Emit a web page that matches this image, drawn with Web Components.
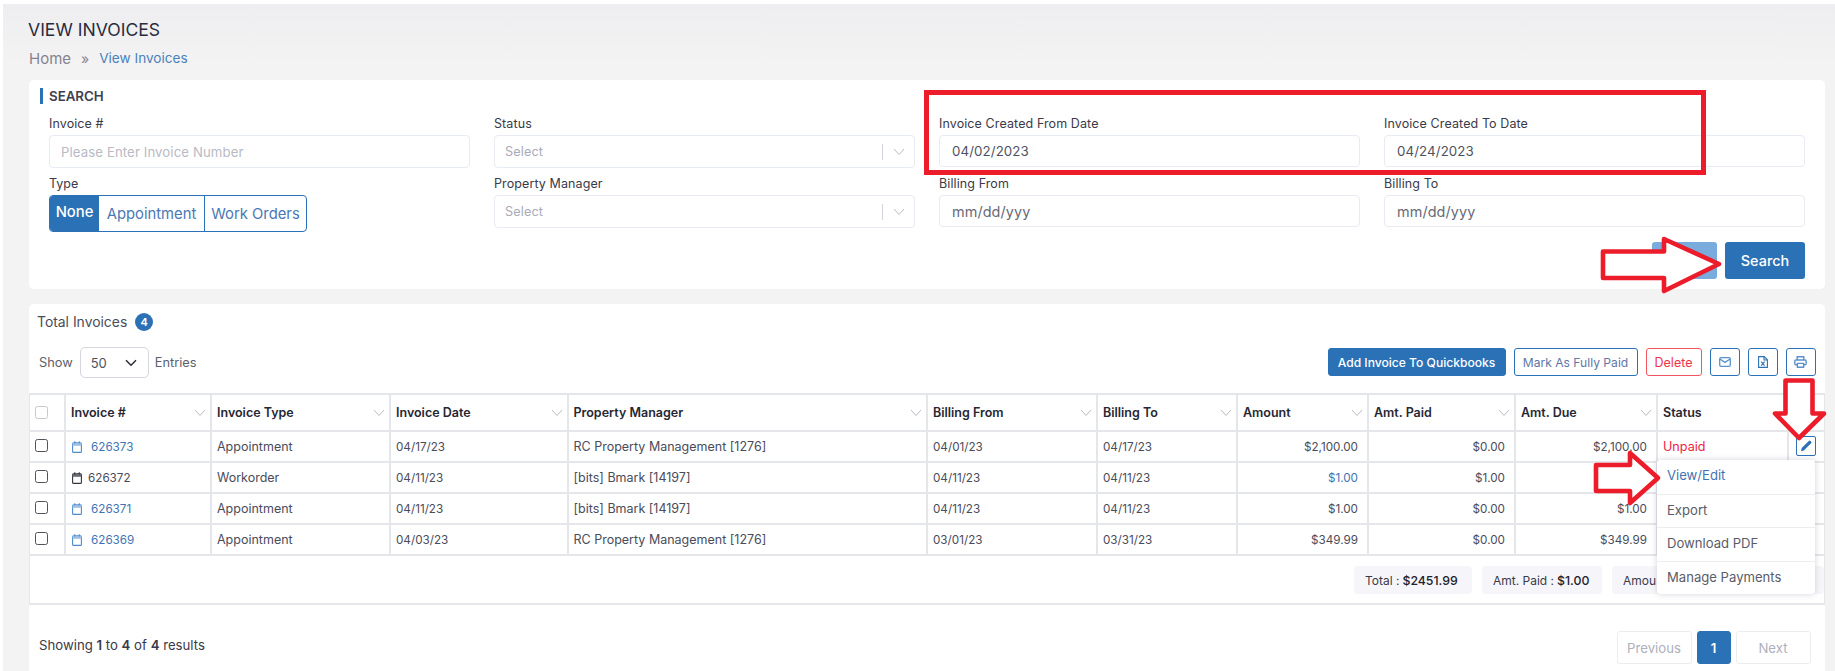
<!DOCTYPE html>
<html lang="en"><head><meta charset="utf-8"><title>View Invoices</title>
<style>
html,body{margin:0;height:671px;overflow:hidden;background:#fff}
body{font-family:"Inter","Open Sans","Liberation Sans",sans-serif;color:#2b2b36}
</style></head><body>
<inv-app></inv-app>
<script>
const BLUE='#2b71b6';
const chev='<svg width="12" height="8" viewBox="0 0 12 8" fill="none" stroke="#b9bcc6" stroke-width="1"><path d="M1 1l5 5.5L11 1"/></svg>';
const cal=(c,f)=>`<svg width="10" height="12" viewBox="0 0 10 12" fill="none" stroke="${c}" stroke-width="1.1"><rect x=".6" y="1.8" width="8.8" height="9.6" rx="1"/><rect x=".6" y="1.8" width="8.8" height="3" fill="${f}" stroke="none"/><path d="M2.8 .2v2.4M7.2 .2v2.4"/></svg>`;
function def(name,css,html,init){
  customElements.define(name,class extends HTMLElement{
    connectedCallback(){
      if(this.shadowRoot)return;
      const r=this.attachShadow({mode:'open'});
      r.innerHTML=`<style>${css}</style>`+(typeof html==='function'?html(this):html);
      if(init)init(this,r);
    }
  });
}
def('inv-field',`
:host{display:flex;flex-direction:column;gap:2px;font-size:12.5px;color:#3a3a48;min-width:0;letter-spacing:.1px}
.l{height:18px;line-height:18px;white-space:nowrap}
.b{height:33px;box-sizing:border-box;border:1px solid #e9ebf3;border-radius:4px;display:flex;align-items:center;padding:0 11px;font-size:13.3px;color:#4e5260;background:#fff;letter-spacing:.1px}
.b.ph{color:#b9bac4;font-size:13.2px}
.b.sel{padding:0 0 0 10px;color:#a9abb8;font-size:12.7px}
.s{flex:1}.d{width:1px;height:16px;background:#d3d4da}.c{width:31px;display:flex;justify-content:center}
.b.date{padding:0 12px;height:32px}
.b.mask{font-size:14.4px;color:#676a76}
`,(h)=>{
  const t=h.getAttribute('value'),k=h.getAttribute('kind')||'';
  const inner=k==='sel'?`<span class="s">${t}</span><span class="d"></span><span class="c">${chev}</span>`:t;
  return `<div class="l">${h.getAttribute('label')}</div><div class="b ${k}">${inner}</div>`;
});
def('inv-type',`
:host{display:flex;flex-direction:column;gap:2px;font-size:12.5px;color:#3a3a48}
.l{height:18px;line-height:18px}
.g{flex:none;display:flex;height:37px;border:1px solid ${BLUE};border-radius:4px;width:258px;box-sizing:border-box;font-size:14.8px;color:#4a78b5;overflow:hidden}
.g span{display:flex;align-items:center;justify-content:center;box-sizing:border-box}
.n{width:49px;background:${BLUE};color:#fff;font-weight:500;padding-bottom:3px}
.a{width:106px;border-right:1px solid ${BLUE}}.w{flex:1}
`,`<div class="l">Type</div><div class="g"><span class="n">None</span><span class="a">Appointment</span><span class="w">Work Orders</span></div>`);
def('inv-search',`
:host{display:block;background:#fff;border-radius:5px;height:209px;box-sizing:border-box;padding:8px 19.5px 10px 11px}
h2{margin:0 0 11px;font-size:13.3px;line-height:16px;font-weight:600;color:#3f3f50;border-left:3px solid ${BLUE};padding-left:6px}
.f{display:grid;grid-template-columns:repeat(4,421px);column-gap:24px;row-gap:7px;padding-left:9px;grid-template-rows:53px 53px}
.r{display:flex;justify-content:flex-end;gap:8px;margin-top:14px}
.x,.y{height:37px;border-radius:3px;display:flex;align-items:center;justify-content:center;box-sizing:border-box}
.x{width:65px;background:#79acdc}
.y{width:80px;background:${BLUE};color:#fff;font-size:14.4px;font-weight:500}
`,`<h2>SEARCH</h2><div class="f">
<inv-field label="Invoice #" value="Please Enter Invoice Number" kind="ph"></inv-field>
<inv-field label="Status" value="Select" kind="sel"></inv-field>
<inv-field label="Invoice Created From Date" value="04/02/2023" kind="date"></inv-field>
<inv-field label="Invoice Created To Date" value="04/24/2023" kind="date"></inv-field>
<inv-type></inv-type>
<inv-field label="Property Manager" value="Select" kind="sel"></inv-field>
<inv-field label="Billing From" value="mm/dd/yyy" kind="date mask"></inv-field>
<inv-field label="Billing To" value="mm/dd/yyy" kind="date mask"></inv-field>
</div><div class="r"><div class="x"></div><div class="y">Search</div></div>`);
def('inv-toolbar',`
:host{display:flex;align-items:center;height:31px;font-size:12.8px;color:#5c5f6c}
.sel{width:69px;height:31px;box-sizing:border-box;border:1px solid #d5d7de;border-radius:5px;margin:0 6px 0 7px;display:flex;align-items:center;justify-content:space-between;padding:0 11px 0 10px;color:#4e5260;font-size:13px}
.sp{flex:1}
.bs{display:flex;gap:8px;margin:-1px 9px 0 0}
.b{height:28px;box-sizing:border-box;border-radius:3px;border:1px solid ${BLUE};display:flex;align-items:center;justify-content:center;font-size:12.1px;color:${BLUE};background:#fff;white-space:nowrap}
.q{width:178px;background:${BLUE};color:#fff;font-weight:500}
.m{width:124px;color:#5f77a8}
.d{width:56px;border-color:#ef5460;color:#ef3347;font-size:12.5px}
.i{width:30px}
`,`<span>Show</span><div class="sel">50<svg width="12" height="8" viewBox="0 0 12 8" fill="none" stroke="#2b2b36" stroke-width="1.5"><path d="M1 1.2l5 5 5-5"/></svg></div><span>Entries</span><span class="sp"></span>
<div class="bs"><div class="b q">Add Invoice To Quickbooks</div><div class="b m">Mark As Fully Paid</div><div class="b d">Delete</div>
<div class="b i"><svg width="12" height="10" viewBox="0 0 12 10" fill="none" stroke="#5b92cc" stroke-width="1.3"><rect x=".7" y=".7" width="10.6" height="8.6" rx="1.4"/><path d="M.9 2l5.1 3.4L11.1 2"/></svg></div>
<div class="b i"><svg width="10" height="12" viewBox="0 0 10 12" fill="none" stroke="${BLUE}" stroke-width="1.1"><path d="M.6.6h5.6l3.2 3.2v7.6H.6z"/><path d="M6 .6v3.4h3.4"/><path d="M3.2 5.6l3.4 4M6.6 5.6l-3.4 4"/></svg></div>
<div class="b i"><svg width="13" height="12" viewBox="0 0 13 12" fill="none" stroke="#5b92cc" stroke-width="1.4"><path d="M3.2 4V.8h6.6V4"/><rect x=".8" y="4" width="11.4" height="4.8" rx="1.2"/><path d="M3.4 7.4h6.2v3.8H3.4z" fill="#fff"/></svg></div></div>`);
const COLS='36px 146px 179px 177.5px 359.5px 170px 140px 131px 147px 142px 131px 36.5px';
def('inv-table',`
:host{display:block;position:relative;font-size:11.7px;color:#4a4c5a}
.t{border:solid #e5e6ea;border-width:2px 1px 2px 1px;height:212px;box-sizing:border-box}
.r{display:grid;grid-template-columns:${COLS};height:31px;box-sizing:border-box;border-bottom:2px solid #e5e6ea}
.r.h{height:37px;font-weight:600;color:#272733;font-size:12.5px}
.c{display:flex;align-items:center;padding:0 5px;border-right:2px solid #e5e6ea;box-sizing:border-box;white-space:nowrap;min-width:0}
.r:not(.h) .c{padding-left:5px;padding-right:9px}
.h .c{justify-content:space-between;padding-right:4px}
.c.n{justify-content:flex-end}
.c.tx{font-size:12.5px}
.r:not(.h) .c.last{border-right:0;padding:0}
.cb{width:13px;height:13px;border:1px solid #50525c;border-radius:2.5px;box-sizing:border-box;margin-top:-3px}
.h .cb{border-color:#c7c9d0;margin-top:0}
.lnk{color:#3f74b4}
.id{display:flex;align-items:center;gap:6px;margin-left:1px}
.id svg{flex:none}
.id.on{gap:9px}
.un{color:#ee1c40;font-size:12.6px}
.p{width:20px;height:20px;box-sizing:border-box;border:1px solid ${BLUE};border-radius:2px;display:flex;align-items:center;justify-content:center;margin:4px 0 0 7px;align-self:start}
.tot{position:absolute;right:0;left:0;top:163px;height:48px;display:flex;align-items:center;gap:10px;padding-left:1325px;box-sizing:border-box}
.chip{height:28px;background:#f6f6fa;border-radius:4px;display:flex;align-items:center;padding:0 11px;font-size:12px;color:#3a3a48;white-space:nowrap;box-sizing:border-box}
.chip b{font-weight:500;color:#22222c;margin-left:3px;font-size:12.3px}
.menu{position:absolute;left:1628px;top:67px;width:158px;height:134px;background:#fff;border-radius:3px;box-shadow:0 0 6px rgba(60,60,90,.22);z-index:2;font-size:13.1px;color:#5a5c68;display:flex;flex-direction:column}
.menu div{flex:1;display:flex;align-items:center;padding:0 10px 2px;border-bottom:1px solid #eceded}
.menu div:last-child{border:0}
.menu .on{color:#3f74b4;padding-bottom:3px}
`,()=>{
  const rows=[['626373',1,'Appointment','04/17/23','RC Property Management [1276]','04/01/23','04/17/23','$2,100.00','$0.00','$2,100.00'],
  ['626372',0,'Workorder','04/11/23','[bits] Bmark [14197]','04/11/23','04/11/23','$1.00','$1.00',''],
  ['626371',1,'Appointment','04/11/23','[bits] Bmark [14197]','04/11/23','04/11/23','$1.00','$0.00','$1.00'],
  ['626369',1,'Appointment','04/03/23','RC Property Management [1276]','03/01/23','03/31/23','$349.99','$0.00','$349.99']];
  const heads=['Invoice #','Invoice Type','Invoice Date','Property Manager','Billing From','Billing To','Amount','Amt. Paid','Amt. Due'];
  let s='<div class="t"><div class="r h"><div class="c"><span class="cb"></span></div>'+heads.map(x=>`<div class="c"><span>${x}</span>${chev}</div>`).join('')+'<div class="c" style="grid-column:span 2;border-right:0">Status</div></div>';
  rows.forEach((r,i)=>{
    const link=r[1];
    s+=`<div class="r"><div class="c"><span class="cb"></span></div><div class="c"><span class="id ${link?'on':''}">${link?cal('#4d8bcb','#9dc0e4'):cal('#33343c','#6a6b72')}<span class="${link?'lnk':''}">${r[0]}</span></span></div><div class="c tx">${r[2]}</div><div class="c">${r[3]}</div><div class="c tx">${r[4]}</div><div class="c">${r[5]}</div><div class="c">${r[6]}</div><div class="c n ${i==1?'lnk':''}">${r[7]}</div><div class="c n">${r[8]}</div><div class="c n">${r[9]}</div><div class="c ${i==0?'un':''}">${i==0?'Unpaid':''}</div><div class="c last">${i==0?'<span class="p"><svg width="14" height="14" viewBox="0 0 14 14"><path d="M2 12.3l.7-3.2L9.8 2a1.3 1.3 0 0 1 1.8 0l.4.4a1.3 1.3 0 0 1 0 1.8L4.9 11.4z" fill="'+BLUE+'"/></svg></span>':''}</div></div>`;
  });
  s+=`</div><div class="tot"><div class="chip" style="width:118px">Total :<b>$2451.99</b></div><div class="chip" style="width:120px">Amt. Paid :<b>$1.00</b></div><div class="chip" style="width:212px">Amou</div></div>
  <div class="menu"><div class="on">View/Edit</div><div>Export</div><div>Download PDF</div><div>Manage Payments</div></div>`;
  return s;
});
def('inv-pager',`
:host{display:flex;align-items:center;justify-content:space-between;height:33px;font-size:13.2px;color:#3a3a48;padding:0 14px 0 10px}
b{font-weight:600}
.t{margin-bottom:6px}
.p{display:flex;gap:5px}
.p span{height:33px;box-sizing:border-box;border:1px solid #eceded;border-radius:3px;display:flex;align-items:center;justify-content:center;width:75px;color:#aeb0bc}
.p .on{width:34px;background:${BLUE};color:#fff;border-color:${BLUE};font-weight:600}
`,`<div class="t">Showing <b>1</b> to <b>4</b> of <b>4</b> results</div><div class="p"><span>Previous</span><span class="on">1</span><span>Next</span></div>`);
def('inv-list',`
:host{display:block;background:#fff;border-radius:5px 5px 0 0;height:367px;box-sizing:border-box;padding-top:9px}
.top{display:flex;align-items:center;gap:8px;height:18px;padding-left:8px;font-size:13.9px;color:#4a4c5a}
.bd{width:18px;height:18px;border-radius:50%;background:${BLUE};color:#fff;font-size:11px;font-weight:600;display:flex;align-items:center;justify-content:center}
inv-toolbar{margin:16px 0 15px 10px}
inv-pager{margin-top:26px}
`,`<div class="top">Total Invoices <span class="bd">4</span></div><inv-toolbar></inv-toolbar><inv-table></inv-table><inv-pager></inv-pager>`);
def('inv-marks',`
:host{position:absolute;inset:0;pointer-events:none;z-index:5}
svg{position:absolute;left:0;top:0}
`,`<svg width="1835" height="671" viewBox="0 0 1835 671" fill="#fff" stroke="#ec1c2b" stroke-width="4.6" stroke-linejoin="round">
<rect x="926.5" y="92.5" width="777" height="80" fill="none" stroke-width="5" stroke-linejoin="miter"/>
<path d="M1603 251.5H1664V239L1719 264L1664 291V278H1603z"/>
<path d="M1785.5 380.5H1812.5V413.5H1824L1799 438L1775 413.5H1785.5z"/>
<path d="M1596 465H1630V453L1658 478L1630 503V491H1596z"/>
</svg>`);
def('inv-app',`
:host{display:block;height:671px;margin:0;padding:4px 0 0 3px;box-sizing:border-box;background:#fff}
.w{background:linear-gradient(#eeeef0,#f3f3f4 60px);height:667px;box-sizing:border-box;padding:0 10.5px 0 26px;display:flex;flex-direction:column;overflow:hidden}
h1{margin:16px 0 0 -1px;font-size:17.6px;line-height:20px;font-weight:400;color:#2a2c3e}
nav{margin-top:8px;height:20px;display:flex;align-items:center;font-size:15px;color:#85838f}
nav i{font-style:normal;margin:0 10px;font-size:14px}
nav span{color:#4b81bb;font-size:13.6px}
inv-search{margin-top:12px}
inv-list{margin-top:15px}
`,`<div class="w"><h1>VIEW INVOICES</h1><nav>Home<i>»</i><span>View Invoices</span></nav><inv-search></inv-search><inv-list></inv-list></div><inv-marks></inv-marks>`);
</script>
</body></html>
